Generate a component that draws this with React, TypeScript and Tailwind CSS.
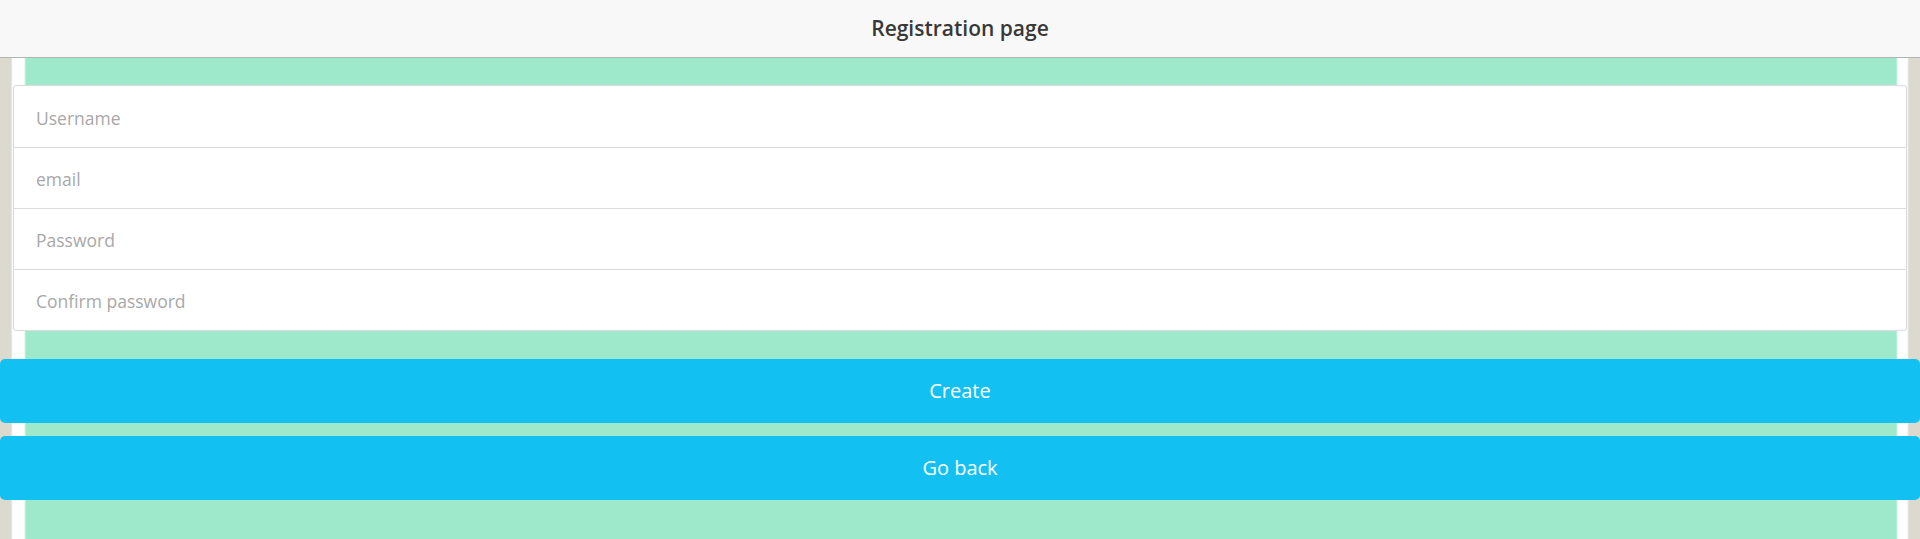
import React from "react";

const fields = ["Username", "email", "Password", "Confirm password"];

export default function App() {
  return (
    <div className="flex h-screen flex-col font-['Open_Sans','Noto_Sans',sans-serif]">
      <header className="flex h-[58px] shrink-0 items-center justify-center border-b border-[#b3b3b3] bg-[#f8f8f8]">
        <h1 className="text-[21px] font-semibold text-[#383838]">Registration page</h1>
      </header>
      <main className="flex-1 bg-[linear-gradient(to_right,#dcd9ce_11px,#f4f3ef_12px,#fff_13px,#fff_24px,#9ee9cb_26px,#9ee9cb_1896px,#fff_1898px,#fff_1907px,#dcd9ce_1909px)] pt-[27px]">
        <div className="mx-[13px] overflow-hidden rounded-[3px] border border-[#dcdcdc] bg-white">
          {fields.map((f, i) => (
            <div
              key={f}
              className={`flex h-[61px] items-center pl-[22px] pt-[3px] text-[17.5px] text-[#a8a8a8] ${i > 0 ? "border-t border-[#dcdcdc]" : ""}`}
            >
              <input
                placeholder={f}
                className="w-full bg-transparent outline-none placeholder:text-[#a8a8a8]"
              />
            </div>
          ))}
        </div>
        <div className="mt-[28px] flex flex-col gap-[13px]">
          <button className="h-[64px] w-full rounded-[5px] bg-[#12c1f2] text-[20px] text-white">Create</button>
          <button className="h-[64px] w-full rounded-[5px] bg-[#12c1f2] text-[20px] text-white">Go back</button>
        </div>
      </main>
    </div>
  );
}
